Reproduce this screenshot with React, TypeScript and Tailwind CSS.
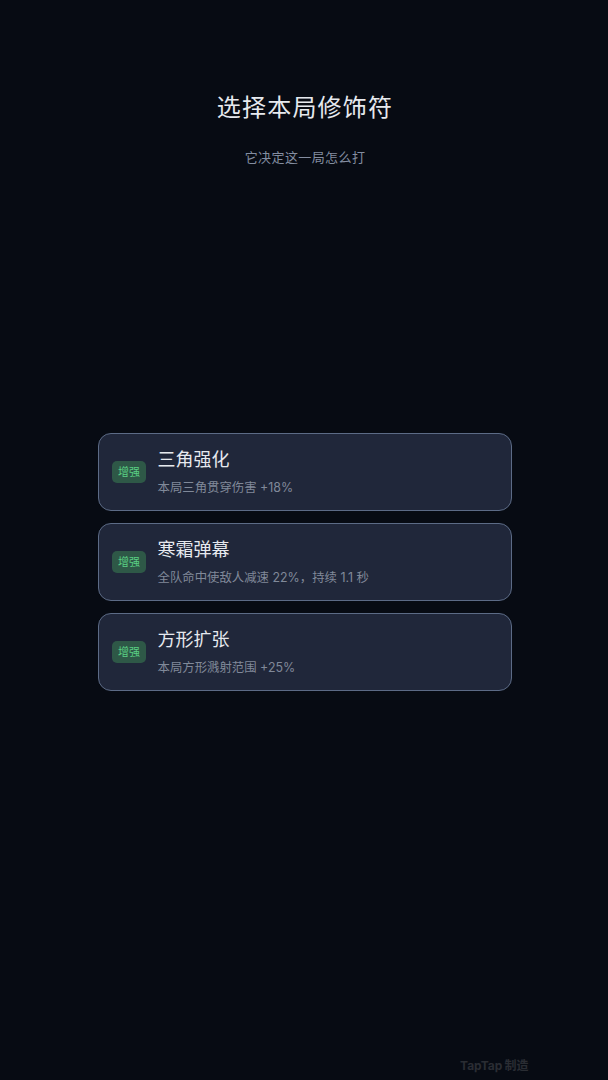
const options = [
  { name: "三角强化", desc: "本局三角贯穿伤害 +18%" },
  { name: "寒霜弹幕", desc: "全队命中使敌人减速 22%，持续 1.1 秒" },
  { name: "方形扩张", desc: "本局方形溅射范围 +25%" },
];

const font = "font-['Inter','Noto_Sans_CJK_SC',sans-serif]";

export default function App() {
  return (
    <div className={`relative flex h-[1080px] w-[608px] flex-col items-center overflow-hidden bg-[#070b13] pl-[2px] ${font}`}>
      <h1 className="mt-[92px] text-[24px] leading-[32px] tracking-[1.2px] text-[#e6e9ee]">选择本局修饰符</h1>
      <p className="mt-[25px] text-[13px] leading-[16px] tracking-[0.4px] text-[#838da0]">它决定这一局怎么打</p>

      <div className="mt-[268px] flex w-[414px] flex-col gap-[12px]">
        {options.map((o) => (
          <div
            key={o.name}
            className="flex h-[78px] items-center rounded-[13px] border-[1.5px] border-[#5c6b86] bg-[#20273a] pl-[13px]"
          >
            <span className="flex h-[22px] w-[34px] items-center justify-center rounded-[5px] bg-[#2e5847] text-[11px] text-[#5ad084]">
              增强
            </span>
            <div className="ml-[11.5px] flex flex-col">
              <span className="text-[18px] leading-[24px] text-[#e6e9ee]">{o.name}</span>
              <span className="mb-[1px] mt-[8px] text-[12.4px] leading-[16px] text-[#808999]">{o.desc}</span>
            </div>
          </div>
        ))}
      </div>

      <div className="absolute left-[460px] top-[1058px] flex items-center gap-[2px] text-[12px] font-bold leading-[16px] text-[#2a2d33]">
        <span>TapTap</span>
        <span>制造</span>
      </div>
    </div>
  );
}
